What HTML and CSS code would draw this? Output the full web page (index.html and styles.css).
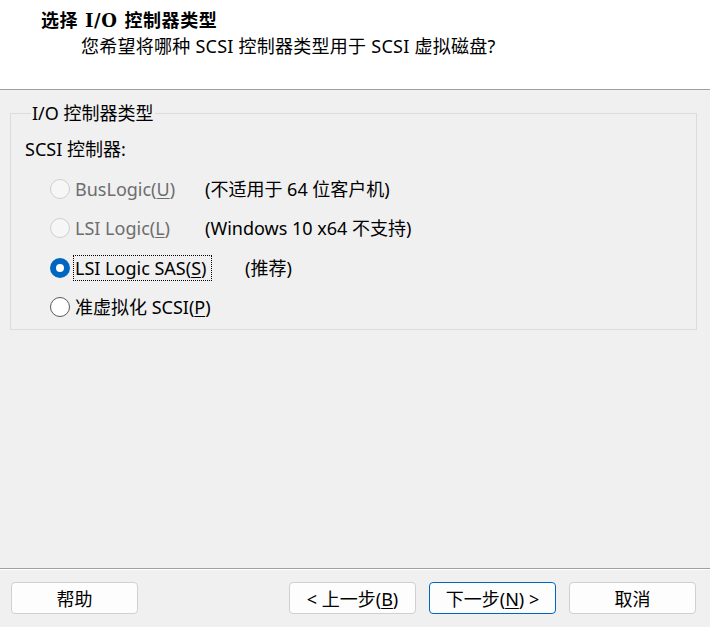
FILE: index.html
```html
<!DOCTYPE html>
<html lang="zh">
<head>
<meta charset="utf-8">
<title>选择 I/O 控制器类型</title>
<link rel="stylesheet" href="styles.css">
</head>
<body>
<div class="dialog">
  <header class="header">
    <h1 class="title">选择 I/O 控制器类型</h1>
    <p class="subtitle">您希望将哪种 SCSI 控制器类型用于 SCSI 虚拟磁盘?</p>
  </header>
  <main class="main">
    <fieldset class="group">
      <legend class="legend">I/O 控制器类型</legend>
      <div class="group-label">SCSI 控制器:</div>
      <div class="options">
        <div class="option disabled">
          <span class="radio"></span>
          <span class="label">BusLogic(<u>U</u>)</span>
          <span class="desc">(不适用于 64 位客户机)</span>
        </div>
        <div class="option disabled">
          <span class="radio"></span>
          <span class="label">LSI Logic(<u>L</u>)</span>
          <span class="desc">(Windows 10 x64 不支持)</span>
        </div>
        <div class="option checked">
          <span class="radio"></span>
          <span class="label focus">LSI Logic SAS(<u>S</u>)</span>
          <span class="desc desc-wide">(推荐)</span>
        </div>
        <div class="option">
          <span class="radio"></span>
          <span class="label">准虚拟化 SCSI(<u>P</u>)</span>
        </div>
      </div>
    </fieldset>
  </main>
  <footer class="footer">
    <button class="btn">帮助</button>
    <div class="spacer"></div>
    <button class="btn">&lt; 上一步(<u>B</u>)</button>
    <button class="btn btn-default">下一步(<u>N</u>) &gt;</button>
    <button class="btn">取消</button>
  </footer>
</div>
</body>
</html>
```
FILE: styles.css
```css
* { box-sizing: border-box; }
html, body {
  margin: 0;
  padding: 0;
  width: 710px;
  height: 627px;
  overflow: hidden;
  background: #f0f0f0;
}
body {
  font-family: "Noto Sans", "Noto Sans CJK SC", sans-serif;
  font-size: 18px;
  color: #000;
}
.dialog {
  display: flex;
  flex-direction: column;
  height: 627px;
}
.header {
  height: 90px;
  background: #fff;
  border-bottom: 1px solid #a0a0a0;
  padding: 9px 0 0 41px;
}
.title {
  margin: 0;
  font-size: 18px;
  font-weight: bold;
  line-height: 24px;
  letter-spacing: 0.6px;
  font-family: "DejaVu Serif", "Noto Sans CJK SC", serif;
}
.subtitle {
  margin: 0;
  padding-left: 40px;
  line-height: 24px;
  margin-top: 1px;
  letter-spacing: 0.25px;
}
.main {
  flex: 1;
  padding: 13px 13px 0 10px;
}
.group {
  margin: 0;
  padding: 14px 0 0 14px;
  border: 1px solid #dcdcdc;
  height: 227px;
  min-width: 0;
}
.legend {
  padding: 0 1px;
  margin-left: 6px;
  line-height: 20px;
}
.group-label {
  line-height: 24px;
}
.options {
  display: flex;
  flex-direction: column;
  gap: 15.4px;
  margin-top: 16px;
  padding-left: 25px;
}
.option {
  display: flex;
  align-items: center;
  height: 24px;
}
.radio {
  width: 20px;
  height: 20px;
  border-radius: 50%;
  border: 1px solid #5a5a5a;
  background: #fff;
  flex: none;
  margin-right: 5px;
}
.option.disabled .radio {
  border-color: #cfcfcf;
  background: #f6f6f6;
}
.option.checked .radio {
  border: 6px solid #0067c0;
  background: #fff;
}
.label {
  width: 130px;
  line-height: 22px;
  white-space: nowrap;
}
.option.disabled .label { color: #6d6d6d; }
.label.focus {
  outline: 1px dotted #000;
  outline-offset: 1px;
  width: 135px;
  padding-right: 1px;
}
.desc {
  line-height: 22px;
  white-space: nowrap;
}
.desc-wide { margin-left: 35px; }
.footer {
  height: 59px;
  border-top: 1px solid #a0a0a0;
  box-shadow: inset 0 1px 0 #fff;
  display: flex;
  align-items: flex-start;
  padding: 13px 14px 0 11px;
  gap: 13px;
}
.spacer { flex: 1; }
.btn {
  width: 127px;
  height: 32px;
  border: 1px solid #d0d0d0;
  border-radius: 4px;
  background: #fdfdfd;
  font: inherit;
  color: #000;
  padding: 0;
}
.btn-default { border-color: #0067c0; }
u { text-underline-offset: 2px; }
```
